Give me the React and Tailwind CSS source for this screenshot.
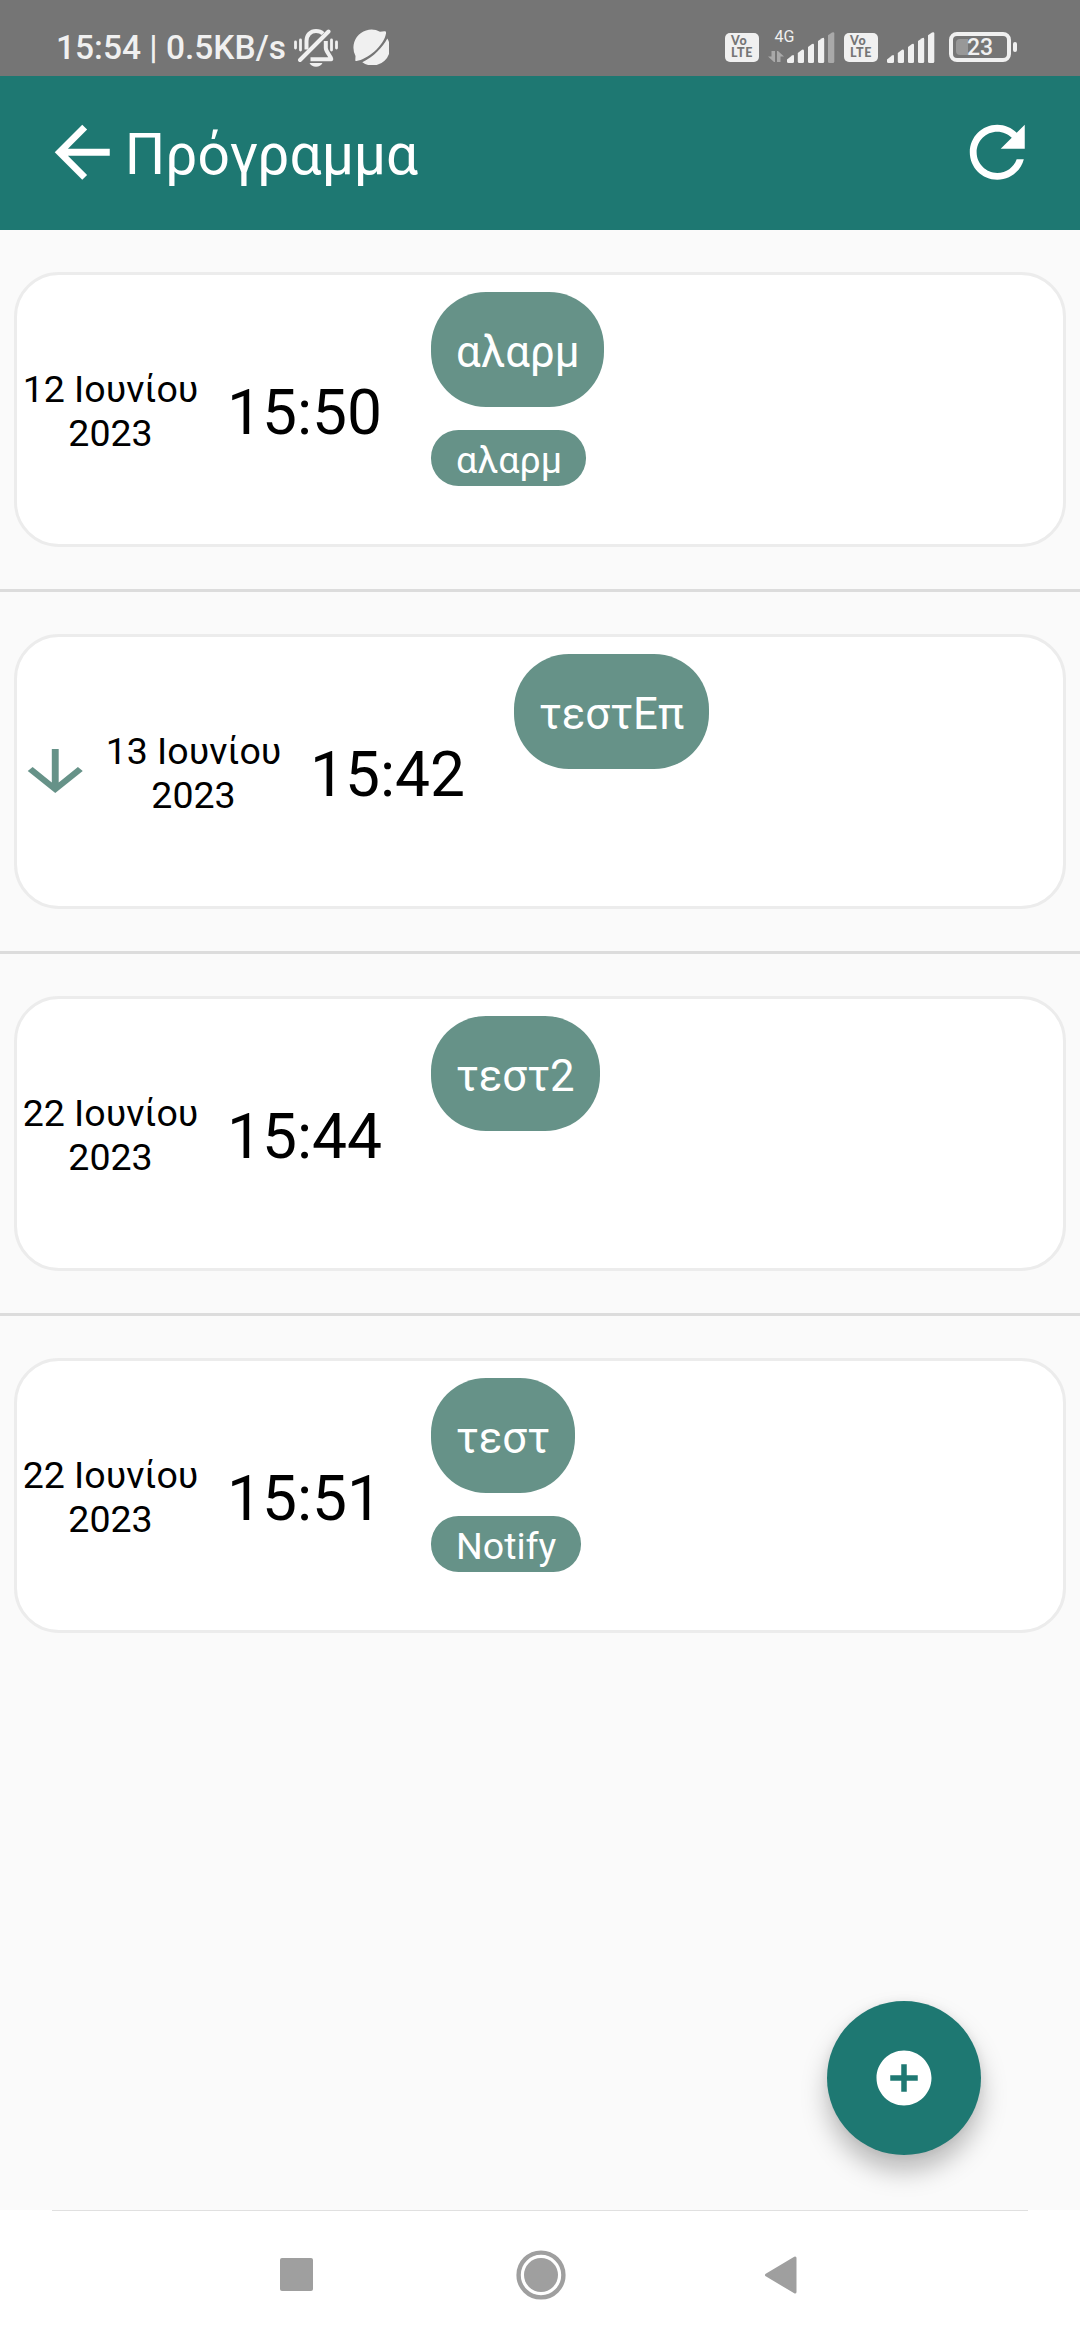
import React from "react";

const entries = [
  { day: "12 Ιουνίου", year: "2023", time: "15:50", title: "αλαρμ", note: "αλαρμ" },
  { day: "13 Ιουνίου", year: "2023", time: "15:42", title: "τεστΕπ", arrow: true },
  { day: "22 Ιουνίου", year: "2023", time: "15:44", title: "τεστ2" },
  { day: "22 Ιουνίου", year: "2023", time: "15:51", title: "τεστ", note: "Notify" },
];

function BellOff() {
  return (
    <svg className="mt-[29px] ml-[10px] h-[38px] w-[44px] shrink-0" viewBox="0 0 44 38" fill="none" stroke="#f0f0f0" strokeLinecap="round" strokeLinejoin="round">
      <path d="M1.5 13v6M6.5 11v10M37.500 11v10M42.500 13v6" strokeWidth="2.800" />
      <path d="M12.500 20.500V12C12.500 6 16.500 2 22 2C25 2 27.400 3 29 4.600" strokeWidth="4" strokeLinecap="butt" />
      <path d="M31.800 12V19C31.800 23 37 27 37.300 30.300H16.500" strokeWidth="4" strokeLinecap="butt" />
      <path d="M6 31L34.500 2.500" strokeWidth="4" />
      <path d="M15.500 34H28.500C27 36.500 25 37.800 22 37.800S17 36.500 15.500 34Z" fill="#f0f0f0" stroke="none" />
    </svg>
  );
}

function Planet() {
  return (
    <svg className="mt-[29px] ml-[15px] h-[36px] w-[36px] shrink-0" viewBox="0 0 36 36" fill="#f0f0f0">
      <path d="M27 2.800A18 18 0 0 0 2.500 27L2.300 31Q2.200 32.300 3.600 32C14 30.500 31 17 33 4.500Q33.500 2 31.400 2.300Z" />
      <path d="M34.300 9.500C30 18 20.500 28 9.300 33.300A17.600 17.600 0 0 0 34.300 9.500Z" />
    </svg>
  );
}

function Volte() {
  return (
    <div className="mt-[33px] flex h-[29px] w-[34px] shrink-0 flex-col rounded-[5px] bg-[#f0f0f0] pl-[6px] pt-[2px] font-['Lato',sans-serif] text-[12.500px] leading-[12px] font-black text-[#757575]">
      <span className="tracking-[0.800px]">Vo</span>
      <span className="tracking-[0.600px]">LTE</span>
    </div>
  );
}

function Bars({ dim }) {
  return (
    <svg className="h-[31px] w-[48px] shrink-0" viewBox="0 0 48 31" fill="#f0f0f0">
      <path d="M0 27.500L5 23.400Q7 22.300 7 24.500V29.500Q7 31 5.500 31H1.500Q0 31 0 29.500Z" />
      <path d="M10.800 21L15 17.800Q17 16.800 17 19V29.500Q17 31 15.500 31H12.300Q10.800 31 10.800 29.500Z" />
      <path d="M21 15L25 12Q27 11 27 13V29.500Q27 31 25.500 31H22.500Q21 31 21 29.500Z" />
      <path d="M31 9L35 6.200Q37.200 5.200 37.200 7.200V29.500Q37.200 31 35.700 31H32.500Q31 31 31 29.500Z" />
      <path fill={dim ? "#a9a9a9" : "#f0f0f0"} d="M41 3.300L45 0.500Q47.300 -0.500 47.300 1.500V29.500Q47.300 31 45.800 31H42.500Q41 31 41 29.500Z" />
    </svg>
  );
}

function StatusBar() {
  return (
    <div className="flex h-[76px] items-start bg-[#757575] pl-[56px] text-[#f0f0f0]">
      <span className="mt-[28px] w-[228px] text-[33.500px] leading-[40px] font-medium whitespace-nowrap">15:54 | 0.5KB/s</span>
      <BellOff />
      <Planet />
      <div className="mr-[63px] ml-auto flex items-start">
        <Volte />
        <div className="mt-[29px] ml-[9px] flex w-[19.300px] shrink-0 flex-col">
          <span className="ml-[6.500px] h-[22px] text-[16px] leading-[15px] whitespace-nowrap">4G</span>
          <svg className="h-[11px] w-[16px]" viewBox="0 0 16 11" fill="#a9a9a9">
            <path d="M3.500 0H7V11H6L0 5.500H3.500Z" />
            <path d="M9 0H10L16 5.500H12.500V11H9Z" />
          </svg>
        </div>
        <div className="mt-[32px]"><Bars dim /></div>
        <div className="ml-[8.700px]"><Volte /></div>
        <div className="mt-[32px] ml-[9.300px]"><Bars /></div>
        <div className="mt-[32px] ml-[13.700px] flex items-center">
          <div className="flex h-[30px] w-[62px] items-center rounded-[8px] border-4 border-[#f0f0f0] pl-[3px]">
            <div className="h-[16px] w-[12px] rounded-l-[4px] bg-[#989898]" />
            <span className="-ml-px pt-px text-[23px] leading-[22px] font-medium">23</span>
          </div>
          <div className="ml-[2px] h-[10px] w-[4px] rounded-[2px] bg-[#f0f0f0]" />
        </div>
      </div>
    </div>
  );
}

function Header() {
  return (
    <header className="flex h-[154px] items-center bg-[#1e7872] pr-[41.250px] pl-[41.250px] text-white">
      <svg className="-mt-[2px] size-[82.500px]" viewBox="0 0 24 24" fill="currentColor">
        <path d="M20 11H7.830l5.590-5.590L12 4l-8 8 8 8 1.410-1.410L7.830 13H20v-2z" />
      </svg>
      <h1 className="ml-px pt-[3px] text-[56.800px] leading-[64px] font-normal">Πρόγραμμα</h1>
      <svg className="-mt-[2px] ml-auto size-[82.500px]" viewBox="0 0 24 24" fill="currentColor">
        <path d="M17.650 6.350C16.200 4.900 14.210 4 12 4c-4.420 0-7.990 3.580-7.990 8s3.570 8 7.990 8c3.730 0 6.840-2.550 7.730-6h-2.080c-.82 2.330-3.040 4-5.650 4-3.310 0-6-2.690-6-6s2.690-6 6-6c1.660 0 3.140.69 4.220 1.780L13 11h7V4l-2.350 2.350z" />
      </svg>
    </header>
  );
}

function Entry({ entry }) {
  return (
    <li className="border-b-[3px] border-[#dcdcdc] px-[14px] py-[42px] last:border-b-0">
      <div className="flex h-[275px] rounded-[45px] border-[3px] border-[#ececec] bg-white">
        {entry.arrow && (
          <svg className="mt-[101px] -ml-[3px] mr-[3.500px] h-[66px] w-[82.500px] shrink-0" viewBox="0 0 24 24" preserveAspectRatio="none" fill="#669288">
            <path d="M20 12l-1.410-1.410L13 16.170V4h-2v12.170l-5.580-5.590L4 12l8 8 8-8z" />
          </svg>
        )}
        <div className="mt-[92px] ml-[5px] flex w-[177px] shrink-0 flex-col items-center text-[37.500px] leading-[44px] whitespace-nowrap">
          <span>{entry.day}</span>
          <span>{entry.year}</span>
        </div>
        <div className="mt-[101px] ml-[28px] w-[204px] shrink-0 text-[62.300px] leading-[74px]">{entry.time}</div>
        <div className="mt-[17px] flex flex-col items-start text-white">
          <div className="flex h-[115px] items-center rounded-[55px] bg-[#669288] px-[25px] pt-[5px] text-[43.700px] leading-[52px]">{entry.title}</div>
          {entry.note && (
            <div className="mt-[23px] flex h-[56px] items-center rounded-[27.500px] bg-[#669288] pr-[24.500px] pl-[25px] pt-[4px] text-[37.500px] leading-[45px]">{entry.note}</div>
          )}
        </div>
      </div>
    </li>
  );
}

function NavBar() {
  return (
    <nav className="flex h-[130px] flex-col bg-white px-[52px]">
      <div className="h-px bg-[#e0e0e0]" />
      <div className="flex h-[129px] items-start pt-[39px] pl-[228px]">
        <div className="mt-[8px] h-[33px] w-[32.500px] rounded-[2px] bg-[#9f9f9f]" />
        <svg className="ml-[203px] size-[50px]" viewBox="0 0 50 50">
          <circle cx="25" cy="25" r="22.400" fill="none" stroke="#9f9f9f" strokeWidth="4.400" />
          <circle cx="25" cy="25" r="17" fill="#9f9f9f" />
        </svg>
        <svg className="mt-[6px] ml-[199px] h-[38px] w-[32px]" viewBox="0 0 32 38">
          <path d="M1.500 19L30 2V36Z" fill="#9f9f9f" stroke="#9f9f9f" strokeWidth="3" strokeLinejoin="round" />
        </svg>
      </div>
    </nav>
  );
}

export default function App() {
  return (
    <div className="relative flex h-[2340px] w-[1080px] flex-col overflow-hidden bg-[#fafafa] font-['Roboto',sans-serif] text-black">
      <StatusBar />
      <Header />
      <ul className="grow">
        {entries.map((entry, i) => (
          <Entry key={i} entry={entry} />
        ))}
      </ul>
      <button className="absolute right-[99px] bottom-[185px] flex size-[154px] items-center justify-center rounded-full bg-[#1e7872] shadow-[0_16px_26px_rgba(0,0,0,0.26),0_0_10px_rgba(0,0,0,0.06)]">
        <svg className="size-[66px]" viewBox="0 0 24 24" fill="white">
          <path d="M12 2C6.480 2 2 6.480 2 12s4.480 10 10 10 10-4.480 10-10S17.520 2 12 2zm5 11h-4v4h-2v-4H7v-2h4V7h2v4h4v2z" />
        </svg>
      </button>
      <NavBar />
    </div>
  );
}
